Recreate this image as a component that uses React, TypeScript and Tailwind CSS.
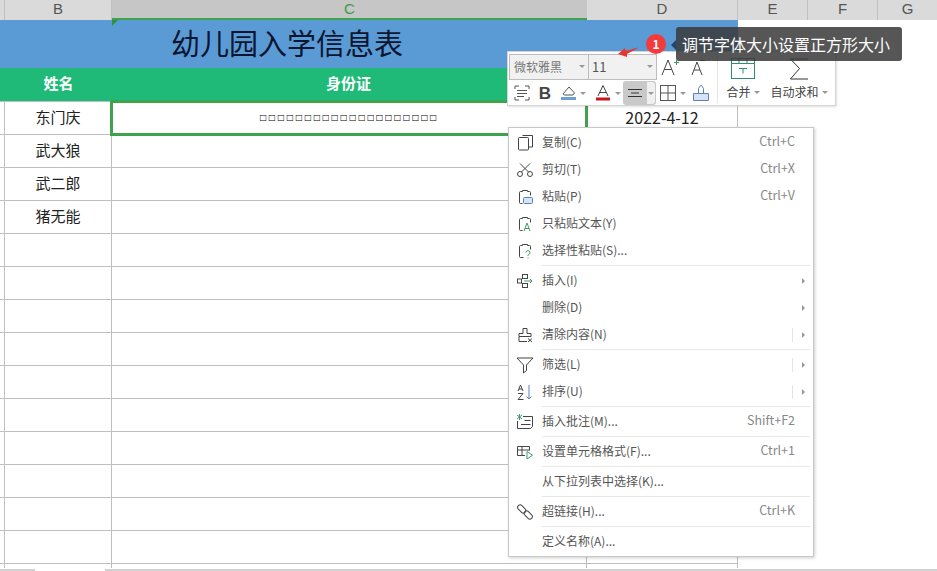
import type { ReactNode } from "react"

const names = ["东门庆", "武大狼", "武二郎", "猪无能"]
const emptyRows = Array.from({ length: 11 }, (_, i) => i)

type Item = { label: string; icon?: ReactNode; shortcut?: string; arrow?: boolean; split?: boolean }

const ink = { fill: "none", stroke: "#444", strokeWidth: 1 }

function Icon({ children }: { children: ReactNode }) {
  return (
    <svg width="18" height="18" viewBox="0 0 18 18" fill="none" stroke="#444" strokeWidth="1">
      {children}
    </svg>
  )
}

const clip = "M3.5 4.5a1 1 0 0 1 1-1h2v-1h5v1h2a1 1 0 0 1 1 1"

const groups: Item[][] = [
  [
    {
      label: "复制(C)",
      shortcut: "Ctrl+C",
      icon: (
        <Icon>
          <path d="M6.5 1.500h10v11.500h-4" />
          <rect x="2.500" y="3.500" width="10" height="12.500" rx="1" />
        </Icon>
      ),
    },
    {
      label: "剪切(T)",
      shortcut: "Ctrl+X",
      icon: (
        <Icon>
          <circle cx="4" cy="13" r="2.500" />
          <circle cx="14" cy="13" r="2.500" />
          <path d="M5.500 11 14 2.500M12.500 11 4 2.500" />
        </Icon>
      ),
    },
    {
      label: "粘贴(P)",
      shortcut: "Ctrl+V",
      icon: (
        <Icon>
          <path d={clip} />
          <path d="M3.500 4.500v10a1 1 0 0 0 1 1h2" />
          <path d="M14.500 4.500v3" />
          <rect x="7.500" y="9.500" width="9" height="6" rx="1" fill="#d5e3f5" stroke="#5b82b8" />
        </Icon>
      ),
    },
    {
      label: "只粘贴文本(Y)",
      icon: (
        <Icon>
          <path d={clip} />
          <path d="M3.500 4.500v10a1 1 0 0 0 1 1h2M14.500 4.500v3" />
          <path d="M8 16l3-8 3 8M9 13.500h4" stroke="#3f9a6b" />
        </Icon>
      ),
    },
    {
      label: "选择性粘贴(S)...",
      icon: (
        <Icon>
          <path d={clip} />
          <path d="M3.500 4.500v10a1 1 0 0 0 1 1h3M14.500 4.500v3" />
          <path d="M10 10.500a2 2 0 1 1 2.500 2c-.5.300-.5.500-.5 1.500M12 15.500v1" stroke="#3f9a6b" />
        </Icon>
      ),
    },
  ],
  [
    {
      label: "插入(I)",
      arrow: true,
      icon: (
        <Icon>
          <rect x="6.500" y="2.500" width="5" height="4" />
          <rect x="6.500" y="11.500" width="5" height="4" />
          <rect x="1.500" y="7" width="4" height="4" />
          <path d="M8 9h8M14 7l2 2-2 2" stroke="#3f9a6b" />
        </Icon>
      ),
    },
    { label: "删除(D)", arrow: true },
    {
      label: "清除内容(N)",
      arrow: true,
      split: true,
      icon: (
        <Icon>
          <path d="M7 2.500h4v5h4v3H3v-3h4zM3 10.500v5h8" />
          <path d="M12 12.500l4 3.500M16 12.500l-4 3.500" />
        </Icon>
      ),
    },
  ],
  [
    {
      label: "筛选(L)",
      arrow: true,
      split: true,
      icon: (
        <svg width="18" height="18" viewBox="0 0 18 18" {...ink}>
          <path d="M1 2h16l-6.500 7v5.500l-3 2.500V9z" />
        </svg>
      ),
    },
    {
      label: "排序(U)",
      arrow: true,
      split: true,
      icon: (
        <Icon>
          <path d="M2 8l2.500-6L7 8M3 6h3M2 10.500h5L2 16.500h5.500" />
          <path d="M13 2v14M10.500 13.500 13 16l2.500-2.500" stroke="#5b82b8" />
        </Icon>
      ),
    },
  ],
  [
    {
      label: "插入批注(M)...",
      shortcut: "Shift+F2",
      icon: (
        <Icon>
          <path d="M7 3.500h9.500v10l-2 2h-13V8" />
          <path d="M8.500 7.500h6M5 11.500h9.500" />
          <path d="M1 2l5 4M6 2 1 6M3.500 1v6" stroke="#3f9a6b" />
        </Icon>
      ),
    },
  ],
  [
    {
      label: "设置单元格格式(F)...",
      shortcut: "Ctrl+1",
      icon: (
        <Icon>
          <path d="M9 12.500H1.500v-9h12v4M1.500 7h12M6 3.500v9" />
          <path d="M11 8.500v7.500l5.500-3.800z" stroke="#3f9a6b" />
        </Icon>
      ),
    },
  ],
  [{ label: "从下拉列表中选择(K)..." }],
  [
    {
      label: "超链接(H)...",
      shortcut: "Ctrl+K",
      icon: (
        <Icon>
          <rect x="1" y="3.500" width="9.500" height="5" rx="2.500" transform="rotate(45 5.750 6)" />
          <rect x="7.500" y="9.500" width="9.500" height="5" rx="2.500" transform="rotate(45 12.250 12)" />
        </Icon>
      ),
    },
  ],
  [{ label: "定义名称(A)..." }],
]

function Caret({ className = "" }: { className?: string }) {
  return <span className={`h-0 w-0 border-x-[3px] border-t-[3px] border-x-transparent border-t-[#999] ${className}`} />
}

function ContextMenu() {
  return (
    <div className="absolute left-[508px] top-[127px] w-[306px] border border-[#c8c8c8] bg-white py-px text-xs text-[#555] shadow-[1px_1px_3px_rgba(0,0,0,0.2)]">
      {groups.map((group, i) => (
        <div key={i}>
          {i > 0 && (
            <div className="flex h-[3px] items-center pl-[33px] pr-[3px]">
              <div className="h-px w-full bg-[#e8e8e8]" />
            </div>
          )}
          {group.map((item) => (
            <div key={item.label} className="flex h-[27px] items-center">
              <span className="flex w-[33px] justify-center pr-[1px]">{item.icon}</span>
              <span className="flex-1 pb-[2px]">{item.label}</span>
              {item.shortcut && <span className="mr-[18px] pb-[2px] text-[12.5px] text-[#888]">{item.shortcut}</span>}
              {item.split && <span className="mr-[9px] h-[14px] w-px bg-[#e4e4e4]" />}
              {item.arrow && (
                <span className="mr-[8px] h-0 w-0 border-y-[3px] border-l-[3px] border-y-transparent border-l-[#999]" />
              )}
            </div>
          ))}
        </div>
      ))}
    </div>
  )
}

function MiniToolbar() {
  return (
    <div className="absolute left-[507px] top-[51px] flex h-[55px] w-[329px] border border-[#d4d4d4] bg-white shadow-[1px_1px_2px_rgba(0,0,0,0.12)]">
      <div className="w-[209px] pl-px pt-px">
        <div className="flex h-[27px] items-center">
          <div className="flex h-[26px] w-[148px] border border-[#bdbdbd] bg-[#f1f1f1] text-xs text-[#777]">
            <div className="flex w-[79px] items-center justify-between border-r border-[#bdbdbd] pl-[4px] pr-[3px]">
              微软雅黑
              <Caret />
            </div>
            <div className="flex flex-1 items-center justify-between pl-[3px] pr-[3px] text-[13px] text-[#555]">
              11
              <Caret />
            </div>
          </div>
          <svg width="18" height="18" viewBox="0 0 18 18" fill="none" stroke="#444" className="ml-[4px]">
            <path d="M1 17 7 2l6 15M3.500 11.500h7" />
            <path d="M13 4.500h5M15.500 2v5" stroke="#3f9a6b" />
          </svg>
          <svg width="16" height="18" viewBox="0 0 16 18" fill="none" stroke="#444" className="ml-[12px]">
            <path d="M1 17 6 4l5 13M3 12h6" />
            <path d="M9 2.500h5" />
          </svg>
        </div>
        <div className="flex h-[26px] items-center">
          <svg width="18" height="18" viewBox="0 0 18 18" fill="none" stroke="#555" className="ml-[4px]">
            <path d="M6 2H2v3M12 2h4v3M6 16H2v-3M12 16h4v-3M4 6.500h10M4 9.500h10M4 12.500h7" />
          </svg>
          <span className="ml-[5px] flex w-[18px] justify-center font-['Liberation_Sans',sans-serif] text-[17px] font-bold leading-none text-[#444]">
            B
          </span>
          <svg width="18" height="18" viewBox="0 0 18 18" fill="none" stroke="#555" className="ml-[6px]">
            <path d="M3 10 9 3l5.500 6-1.500 2H4.500z" />
            <path d="M1 14.500h15" stroke="#6ca0d4" strokeWidth="3" />
          </svg>
          <Caret className="ml-[2px]" />
          <svg width="18" height="18" viewBox="0 0 18 18" fill="none" stroke="#444" className="ml-[8px]">
            <path d="M4 12 9 1.500 14 12M5.500 8.500h7" />
            <path d="M2 15h14" stroke="#c8161d" strokeWidth="3" />
          </svg>
          <Caret className="ml-[3px]" />
          <div className="ml-[2px] flex h-[24px] w-[33px] rounded-[3px] bg-[#c9c9c9]">
            <div className="flex w-[24px] items-center justify-center">
              <svg width="16" height="10" viewBox="0 0 16 10" stroke="#333">
                <path d="M1 1.500h14M4 5h8M1 8.500h14" />
              </svg>
            </div>
            <div className="my-px flex w-[8px] items-center justify-center rounded-r-[3px] bg-[#f0f0f0]">
              <Caret />
            </div>
          </div>
          <svg width="16" height="16" viewBox="0 0 16 16" fill="none" stroke="#555" className="ml-[4px]">
            <rect x="0.500" y="0.500" width="15" height="15" />
            <path d="M8 0v16M0 8h16" />
          </svg>
          <Caret className="ml-[4px]" />
          <svg width="18" height="18" viewBox="0 0 18 18" fill="none" className="ml-[6px]">
            <path d="M1.500 9.500h15v7h-15z" fill="#d5e3f5" stroke="#5b82b8" />
            <path d="M6.500 9.500v-5l2-3h1l2 3v5" stroke="#5b82b8" />
          </svg>
        </div>
      </div>
      <div className="my-[2px] w-px bg-[#e4e4e4]" />
      <div className="flex w-[49px] flex-col items-center pl-[1px]">
        <svg width="24" height="21" viewBox="0 0 24 21" fill="none" stroke="#2f8f6b" className="mt-[6px]">
          <rect x="0.500" y="0.500" width="23" height="20" />
          <path d="M0 5.500h24M8 0v5M16 0v5M8 10.500h8M12 10.500v5" />
        </svg>
        <span className="mt-[5px] flex items-center gap-[3px] text-xs text-[#444]">
          合并
          <Caret />
        </span>
      </div>
      <div className="flex flex-1 flex-col items-center pr-[4px]">
        <svg width="20" height="22" viewBox="0 0 20 22" fill="none" stroke="#333" className="mt-[6px]">
          <path d="M19 1H1.500l9 9.500-9 10.500H19" />
        </svg>
        <span className="mt-[4px] flex items-center gap-[3px] text-xs text-[#444]">
          自动求和
          <Caret />
        </span>
      </div>
    </div>
  )
}

function Row({ b, c, d, className = "" }: { b?: string; c?: ReactNode; d?: string; className?: string }) {
  return (
    <div className={`flex h-[33px] w-[738px] border-t border-[#bfbfbf] text-[15px] text-[#222] ${className}`}>
      <div className="w-[5px] border-r border-[#bfbfbf]" />
      <div className="flex w-[107px] items-center justify-center border-r border-[#bfbfbf] pb-[2px]">{b}</div>
      <div className="flex w-[475px] items-center justify-center border-r border-[#bfbfbf]">{c}</div>
      <div className="flex flex-1 items-center justify-center border-r border-[#bfbfbf] pb-[3px] text-base">{d}</div>
    </div>
  )
}

export default function App() {
  return (
    <div className="relative h-[571px] w-[937px] overflow-hidden bg-white font-['Noto_Sans_CJK_SC','Noto_Sans',sans-serif]">
      <div className="flex h-[20px] bg-[#dadada] font-['Liberation_Sans',sans-serif] text-[15px] leading-[18px] text-[#555]">
        <div className="w-[5px] border-r border-[#c0c0c0]" />
        <div className="w-[107px] border-r border-[#c0c0c0] text-center">B</div>
        <div className="w-[475px] border-b-[2px] border-[#3fa34d] bg-[#c6c6c6] text-center text-[#3b9a45]">C</div>
        <div className="w-[151px] border-r border-[#c0c0c0] text-center">D</div>
        <div className="w-[70px] border-r border-[#c0c0c0] text-center">E</div>
        <div className="w-[70px] border-r border-[#c0c0c0] text-center">F</div>
        <div className="flex-1 text-center">G</div>
      </div>

      <div className="flex h-[48px] w-[738px] items-center bg-[#5b9bd5] pb-[3px] pl-[171px] text-[29px] leading-none text-[#0a1530]">
        幼儿园入学信息表
      </div>

      <div className="flex h-[33px] w-[738px] items-center bg-[#1fba78] pb-[2px] text-[15px] font-bold text-white">
        <div className="w-[117px] text-center">姓名</div>
        <div className="w-[463px] text-center">身份证</div>
      </div>

      <Row
        b={names[0]}
        d="2022-4-12"
        c={
          <span className="font-['DejaVu_Sans',sans-serif] text-[8px] tracking-[1.4px] text-black">{"□".repeat(20)}</span>
        }
      />
      {names.slice(1).map((name) => (
        <Row key={name} b={name} />
      ))}
      {emptyRows.map((n) => (
        <Row key={n} />
      ))}

      <div className="absolute left-[110px] top-[100px] h-[36px] w-[478px] border-[3px] border-[#3fa34d]" />
      <div className="absolute left-[112px] top-[20px] h-0 w-0 border-r-[6px] border-t-[6px] border-r-transparent border-t-[#2f8f45]" />

      <div className="absolute bottom-0 left-0 right-0 h-[3px] bg-white" />
      <div className="absolute bottom-0 left-0 h-[2px] w-[35px] bg-[#d0d0d0]" />
      <div className="absolute bottom-0 left-[105px] right-0 h-[2px] bg-[#d0d0d0]" />

      <MiniToolbar />
      <ContextMenu />

      <svg className="absolute left-[616px] top-[46px]" width="24" height="12" viewBox="0 0 24 12">
        <path d="M22 1.500 10 5 9 2 2 8l9 3 0-3 11-6z" fill="#e8362e" />
      </svg>
      <div className="absolute left-[646px] top-[34px] flex h-[20px] w-[20px] items-center justify-center rounded-full bg-[#f23b3b] text-xs font-bold text-white">
        1
      </div>
      <div className="absolute left-[671px] top-[40px] h-0 w-0 border-y-[5px] border-r-[5px] border-y-transparent border-r-[#24466b]" />
      <div className="absolute left-[676px] top-[27px] flex h-[34px] w-[226px] items-center rounded-[3px] bg-[rgba(58,58,58,0.86)] pl-[6px] text-base text-white">
        调节字体大小设置正方形大小
      </div>
    </div>
  )
}
